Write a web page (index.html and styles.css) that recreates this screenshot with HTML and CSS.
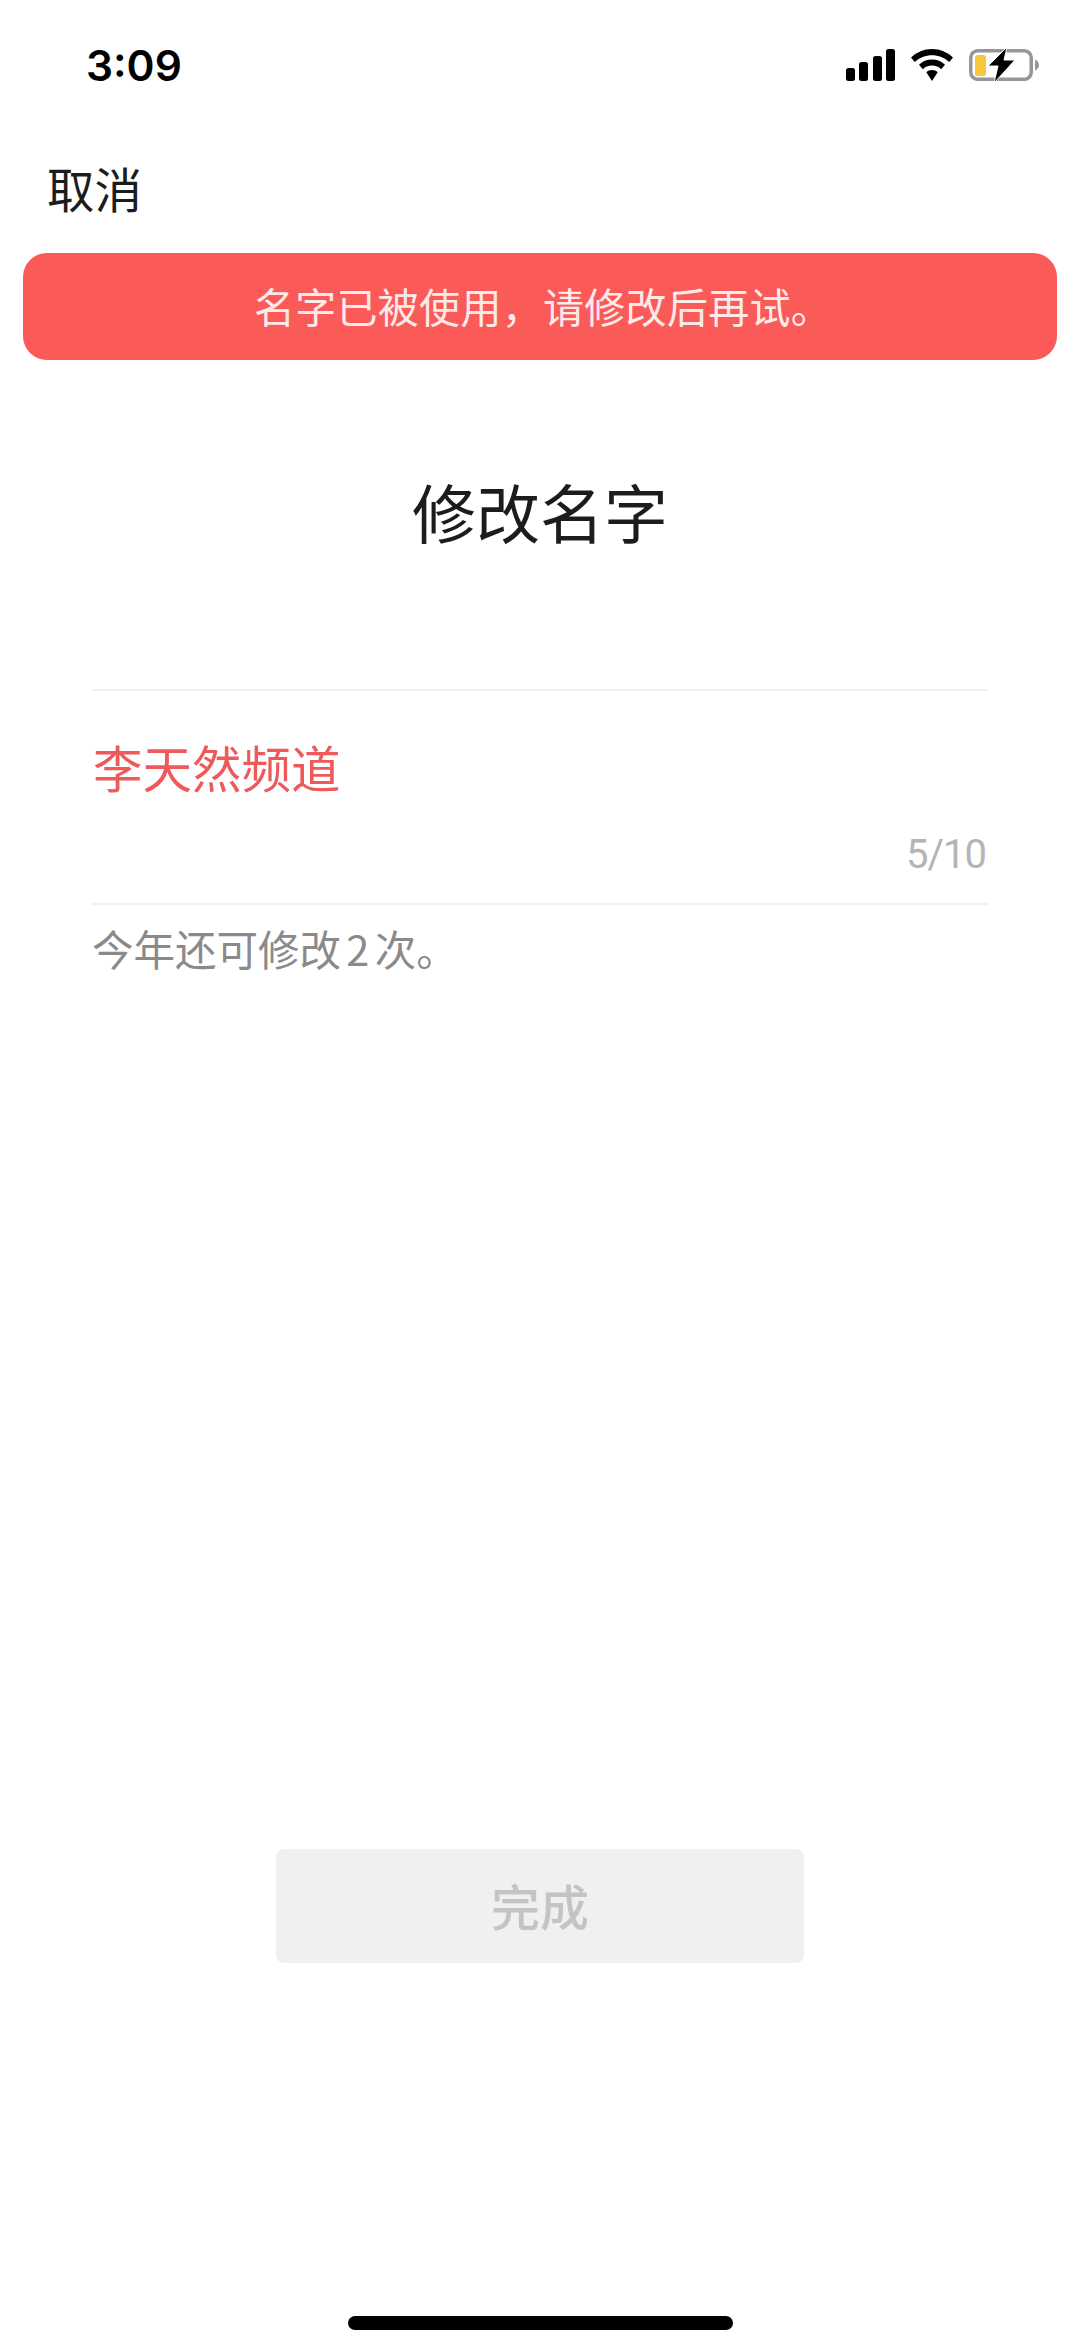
FILE: index.html
```html
<!DOCTYPE html>
<html lang="zh-CN">

<head>
  <meta charset="UTF-8">
  <meta name="viewport" content="width=device-width, initial-scale=1.0">
  <title>修改名字</title>
  <link rel="stylesheet" href="styles.css">
</head>

<body>
  <div class="page">
    <div class="status-bar">
      <span class="status-time">3:09</span>
      <div class="status-icons">
        <svg class="icon-signal" width="49" height="32" viewBox="0 0 49 32">
          <rect x="0" y="19" width="9" height="13" rx="2.5"/>
          <rect x="13" y="13" width="9" height="19" rx="2.5"/>
          <rect x="27" y="7" width="9" height="25" rx="2.5"/>
          <rect x="40" y="0" width="9" height="32" rx="2.5"/>
        </svg>
        <svg class="icon-wifi" width="42" height="32" viewBox="0 0 42 32">
          <path d="M21 0C13 0 6 3 0 8.500L3.800 13C8.500 8.500 14.500 6.200 21 6.200S33.500 8.500 38.200 13L42 8.500C36 3 29 0 21 0Z"/>
          <path d="M21 10.500C16 10.500 11.500 12.400 8 15.800L11.800 20.200C14.200 17.900 17.400 16.600 21 16.600S27.800 17.900 30.200 20.200L34 15.800C30.500 12.400 26 10.500 21 10.500Z"/>
          <path d="M21 21C18.800 21 16.800 21.900 15.300 23.300L21 32L26.700 23.300C25.200 21.900 23.200 21 21 21Z"/>
        </svg>
        <svg class="icon-battery" width="70" height="36" viewBox="0 0 70 36">
          <rect x="1.750" y="3.750" width="60.500" height="28.500" rx="7" fill="none" stroke="#969696" stroke-width="3.500"/>
          <rect x="6" y="8" width="11" height="21" rx="2.500" fill="#f6c63c"/>
          <path d="M66 12.500C68.500 13.500 70 15.500 70 18S68.500 22.500 66 23.500Z" fill="#969696"/>
          <path d="M38 0L19 19H29L25 36L46 13H35Z" fill="#000" stroke="#fff" stroke-width="1"/>
        </svg>
      </div>
    </div>

    <div class="nav-bar">
      <span class="nav-cancel">取消</span>
    </div>

    <div class="toast">名字已被使用，请修改后再试。</div>

    <h1 class="title">修改名字</h1>

    <div class="name-field">
      <div class="name-value">李天然频道</div>
      <div class="name-count">5/10</div>
    </div>
    <p class="hint">今年还可修改 2 次。</p>

    <div class="footer">
      <div class="done-btn">完成</div>
    </div>

    <div class="home-indicator"></div>
  </div>
</body>

</html>
```

FILE: styles.css
```css
* {
  box-sizing: border-box;
}

body {
  margin: 0;
  background-color: #fff;
  font-family: "Noto Sans CJK SC", "Noto Sans", sans-serif;
}

.page {
  width: 1080px;
  height: 2339px;
  display: flex;
  flex-direction: column;
  overflow: hidden;
}

.status-bar {
  height: 130px;
  padding: 0 41px 0 86px;
  display: flex;
  justify-content: space-between;
  align-items: center;
}

.status-time {
  font-family: Inter, "Liberation Sans", sans-serif;
  font-size: 42.5px;
  font-weight: 600;
  color: #000;
}

.status-icons {
  display: flex;
  align-items: center;
  gap: 16px;
}

.nav-bar {
  height: 123px;
  padding: 0 0 8px 47px;
  display: flex;
  align-items: center;
}

.nav-cancel {
  font-size: 47.5px;
  line-height: 1;
  color: #1c1c1c;
}

.toast {
  height: 107px;
  margin: 0 23px;
  padding: 0 0 4px 6px;
  display: flex;
  align-items: center;
  justify-content: center;
  background-color: #fa5a58;
  border-radius: 24px;
  font-size: 41px;
  letter-spacing: 0.3px;
  color: #fde9e8;
}

.title {
  margin: 107px 0 0;
  text-align: center;
  font-size: 64px;
  line-height: 86px;
  font-weight: 400;
  color: #1c1c1c;
}

.name-field {
  margin: 136px 92px 0;
  height: 216px;
  border-top: 2px solid #f0f0f0;
  border-bottom: 2px solid #f0f0f0;
}

.name-value {
  margin-top: 42px;
  padding-left: 1px;
  font-size: 49.5px;
  line-height: 68px;
  color: #ee5a5a;
}

.name-count {
  margin-top: 31px;
  padding-right: 2px;
  text-align: right;
  font-family: Roboto, sans-serif;
  font-weight: 400;
  font-size: 40px;
  letter-spacing: -1px;
  line-height: 46px;
  color: #b4b4b4;
}

.hint {
  margin: 18px 92px 0;
  font-size: 41.5px;
  word-spacing: -4px;
  line-height: 50px;
  color: #8a8a8a;
}

.footer {
  margin-top: 876px;
  display: flex;
  justify-content: center;
}

.done-btn {
  width: 528px;
  height: 114px;
  padding-bottom: 4px;
  display: flex;
  align-items: center;
  justify-content: center;
  background-color: #f0f0f0;
  border-radius: 8px;
  font-size: 49px;
  font-weight: 500;
  color: #c4c4c4;
}

.home-indicator {
  width: 385px;
  height: 14px;
  margin: 353px auto 0;
  background-color: #000;
  border-radius: 7px;
}
```
